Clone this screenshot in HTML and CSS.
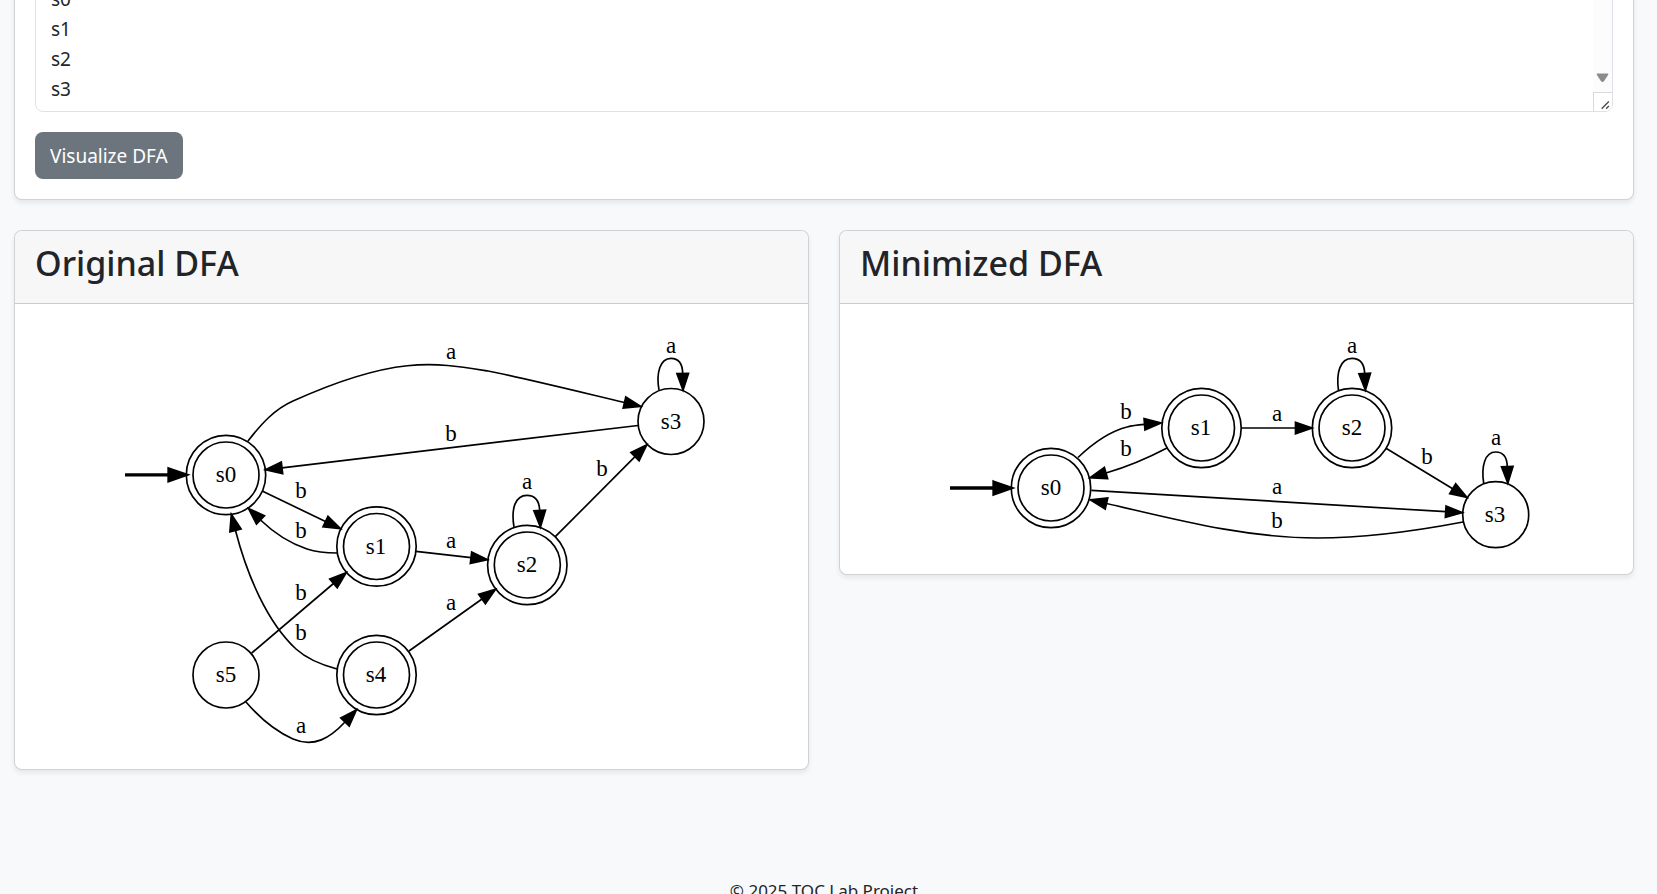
FILE: index.html
```html
<!DOCTYPE html>
<html lang="en">
<head>
<meta charset="utf-8">
<title>DFA Minimizer</title>
<link rel="stylesheet" href="styles.css">
</head>
<body>
<main>
  <form class="card card-body input-card">
    <div class="field">
      <textarea class="control" rows="4" aria-label="Accepting states" spellcheck="false">s0
s1
s2
s3</textarea>
      <div class="scroll-track" aria-hidden="true">
        <svg class="scroll-arrow" viewBox="0 0 13 10"><path d="M1.5 0.5h10q1.2 0 .7 1.2L8 8.3q-1.5 1.6-3 0L.8 1.7Q.3.5 1.5.5z"/></svg>
        <svg class="grip" viewBox="0 0 20 20"><path d="M8.500 17.500L16.500 9.500M13.500 17.500L16.500 14.500"/></svg>
      </div>
    </div>
    <button class="btn" type="button">Visualize DFA</button>
  </form>

  <div class="results">
    <section class="card">
      <header class="card-header"><h3>Original DFA</h3></header>
      <div class="card-body">
        <svg class="graph" viewBox="112 324 600 425" width="600" height="425" role="img" aria-label="Original DFA graph">
          <defs>
            <marker id="head" markerUnits="userSpaceOnUse" markerWidth="24" markerHeight="20" refX="2" refY="10" orient="auto"><path class="tip" d="M2 4.200L18.700 10L2 15.800z"/></marker>
            <marker id="bold-head" markerUnits="userSpaceOnUse" markerWidth="28" markerHeight="24" refX="2" refY="12" orient="auto"><path class="tip bold" d="M2 6.200L18.700 12L2 17.800z"/></marker>
          </defs>
          <g class="node">
            <circle cx="226" cy="475" r="39.700"/><circle cx="226" cy="475" r="33"/><text x="226" y="482">s0</text>
            <circle cx="376.500" cy="546.500" r="39.700"/><circle cx="376.500" cy="546.500" r="33"/><text x="376" y="554">s1</text>
            <circle cx="527.300" cy="565" r="39.700"/><circle cx="527.300" cy="565" r="33"/><text x="527" y="572">s2</text>
            <circle cx="671" cy="421.500" r="33"/><text x="671" y="429">s3</text>
            <circle cx="376.500" cy="675" r="39.700"/><circle cx="376.500" cy="675" r="33"/><text x="376" y="682">s4</text>
            <circle cx="226" cy="675" r="33"/><text x="226" y="682">s5</text>
          </g>
          <path class="edge start" d="M125 474.800H169"/>
          <g class="edge">
            <path d="M248 441C262 423 275 409 293 401C395 355 435 362.500 488 371C510 375 580 392 624.500 402.500"/>
            <path d="M638 425.500L282 467.800"/>
            <path d="M262.700 491.300L325.500 521.500"/>
            <path d="M337 553C326 553 316 552 307 549C289 543 274 533 260.500 520"/>
            <path d="M337 669C322 665 307 659 296 649C267 622 247 575 235.500 530.500"/>
            <path d="M251.700 653L333.500 583.500"/>
            <path d="M246 702C258 716 275 731 293 739C314 748 330 738 345 722"/>
            <path d="M416 551.300L471 557.700"/>
            <path d="M409 651L482 599"/>
            <path d="M514 527C511 509 515 495.300 527 495.300C535 495.300 539.300 501 539.700 510.500"/>
            <path d="M659 390C656 373 660 358.300 671 358.300C679 358.300 682.500 364 682.700 373.500"/>
            <path d="M555.300 536.700L635 456.700"/>
          </g>
          <g class="label">
            <text x="451" y="359">a</text><text x="451" y="441">b</text><text x="671" y="353">a</text>
            <text x="602" y="476">b</text><text x="527" y="489">a</text><text x="451" y="548">a</text>
            <text x="451" y="610">a</text><text x="301" y="498">b</text><text x="301" y="538">b</text>
            <text x="301" y="600">b</text><text x="301" y="640">b</text><text x="301" y="733">a</text>
          </g>
        </svg>
      </div>
    </section>

    <section class="card">
      <header class="card-header"><h3>Minimized DFA</h3></header>
      <div class="card-body">
        <svg class="graph" viewBox="937 324 600 230" width="600" height="230" role="img" aria-label="Minimized DFA graph">
          <g class="node">
            <circle cx="1051" cy="488" r="39.700"/><circle cx="1051" cy="488" r="33"/><text x="1051" y="495">s0</text>
            <circle cx="1201.500" cy="428" r="39.700"/><circle cx="1201.500" cy="428" r="33"/><text x="1201" y="435">s1</text>
            <circle cx="1352" cy="428" r="39.700"/><circle cx="1352" cy="428" r="33"/><text x="1352" y="435">s2</text>
            <circle cx="1495.700" cy="514.700" r="33"/><text x="1495" y="522">s3</text>
          </g>
          <path class="edge start" d="M950 488H994"/>
          <g class="edge">
            <path d="M1078 457.500C1091 445 1108 432 1127 427C1132 425.500 1138 424.800 1144.500 424.300"/>
            <path d="M1167 448C1148 458 1130 466 1106 473"/>
            <path d="M1091.300 490.300L1445.700 511.700"/>
            <path d="M1463 522C1400 534 1358 538 1317 538C1243 538 1170 518 1106.500 503.500"/>
            <path d="M1241.500 428H1295.500"/>
            <path d="M1386 448.300L1452.700 488.700"/>
            <path d="M1338.500 390.500C1336 373 1340 358.300 1352 358.300C1360 358.300 1364.300 364 1364.700 373.500"/>
            <path d="M1483.700 483.500C1481 466 1485 452 1495.700 452C1503 452 1507 457 1507.300 466.500"/>
          </g>
          <g class="label">
            <text x="1126" y="419">b</text><text x="1126" y="456">b</text><text x="1277" y="421">a</text>
            <text x="1352" y="353">a</text><text x="1427" y="464">b</text><text x="1277" y="494">a</text>
            <text x="1277" y="528">b</text><text x="1496" y="445">a</text>
          </g>
        </svg>
      </div>
    </section>
  </div>
</main>
<footer class="footer">© 2025 TOC Lab Project</footer>
</body>
</html>
```
FILE: styles.css
```css
* { box-sizing: border-box; }

body {
  margin: 0;
  height: 100vh;
  overflow: hidden;
  padding: 0 23px 0 14px;
  background: #f8f9fb;
  color: #212529;
  font: 20px/30px "Segoe UI", "Noto Sans", "Open Sans", sans-serif;
}

main { display: flow-root; }

.card {
  background: #fff;
  border: 1px solid rgba(0, 0, 0, .175);
  border-radius: 8px;
  box-shadow: 0 3px 5px rgba(0, 0, 0, .075);
}

.card-body { padding: 20px; }

/* The form is scrolled partly past the top of the viewport. */
.input-card { margin-top: -47px; }

.field { position: relative; margin-bottom: 20px; }

.control {
  display: block;
  width: 100%;
  margin: 0;
  padding: 9px 15px 7px;
  border: 1px solid #dee2e6;
  border-radius: 8px;
  background: #fff;
  color: #212529;
  font: inherit;
  font-size: 19px;
  line-height: 30px;
  resize: none;
  overflow: hidden;
}

.scroll-track {
  position: absolute;
  top: 1px;
  right: 1px;
  bottom: 1px;
  width: 19px;
  display: flex;
  flex-direction: column;
  justify-content: flex-end;
  align-items: center;
  gap: 9px;
  background: #fcfcfc;
  border-radius: 0 7px 7px 0;
  overflow: hidden;
}

.scroll-arrow { width: 13px; height: 10px; fill: #8b8b8b; }

.grip {
  width: 19px;
  height: 19px;
  background: #fff;
  border: solid #d9d9d9;
  border-width: 1px 0 0 1px;
  fill: none;
  stroke: #4a4a4a;
  stroke-width: 1.5;
}

.btn {
  display: block;
  padding: 9px 15px 7px;
  border: 0;
  border-radius: 8px;
  background: #6c757d;
  color: #fff;
  font: inherit;
  font-size: 19px;
  line-height: 31px;
}

.results {
  display: grid;
  grid-template-columns: 1fr 1fr;
  align-items: start;
  gap: 30px;
  margin-top: 30px;
}

.card-header {
  padding: 11px 20px 9px;
  background: #f7f7f7;
  border-bottom: 1px solid rgba(0, 0, 0, .175);
  border-radius: 7px 7px 0 0;
}

.card-header h3 {
  margin: 0 0 10px;
  font-size: 34px;
  line-height: 42px;
  font-weight: 500;
}

.graph {
  display: block;
  max-width: 100%;
  margin: 0 auto;
}

.node circle { fill: none; stroke: #000; stroke-width: 1.67; }

.graph text {
  font: 23px "Liberation Serif", "Times New Roman", serif;
  fill: #000;
  text-anchor: middle;
}

.edge { fill: none; stroke: #000; stroke-width: 1.67; }
.edge path { marker-end: url(#head); }
.edge.start { stroke-width: 3.33; marker-end: url(#bold-head); }
.tip { fill: #000; stroke: #000; stroke-width: 1.67; }
.tip.bold { stroke-width: 3.33; }

.footer {
  margin-top: 106px;
  text-align: center;
  font-size: 17px;
}
```
